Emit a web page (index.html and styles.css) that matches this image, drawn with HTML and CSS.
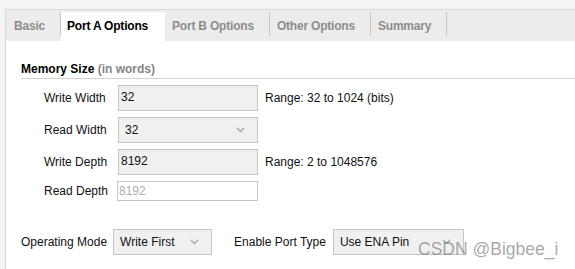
FILE: index.html
```html
<!DOCTYPE html>
<html lang="en">
<head>
  <meta charset="UTF-8" />
  <title>Block Memory Generator - Port A Options</title>
  <link rel="stylesheet" href="styles.css">
</head>
<body>
  <div class="dialog">
    <div class="tabs">
      <div class="tab">Basic</div>
      <div class="tab active">Port A Options</div>
      <div class="tab">Port B Options</div>
      <div class="tab">Other Options</div>
      <div class="tab">Summary</div>
    </div>

    <div class="panel">
      <div class="section-title">Memory Size <span class="hint">(in words)</span></div>

      <div class="fields">
        <label class="field-label">Write Width</label>
        <div class="input">32</div>
        <span class="range">Range: 32 to 1024 (bits)</span>

        <label class="field-label">Read Width</label>
        <div class="select">
          <span>32</span>
          <svg class="chevron" width="9" height="6" viewBox="0 0 9 6"><polyline points="1,1 4.5,4.5 8,1" fill="none" stroke="#a6a6a6" stroke-width="1.4"/></svg>
        </div>
        <span></span>

        <label class="field-label">Write Depth</label>
        <div class="input">8192</div>
        <span class="range">Range: 2 to 1048576</span>

        <label class="field-label">Read Depth</label>
        <div class="input disabled">8192</div>
        <span></span>
      </div>

      <div class="mode-row">
        <label class="mode-label">Operating Mode</label>
        <div class="select mode-select">
          <span>Write First</span>
          <svg class="chevron" width="9" height="6" viewBox="0 0 9 6"><polyline points="1,1 4.5,4.5 8,1" fill="none" stroke="#a6a6a6" stroke-width="1.4"/></svg>
        </div>
        <label class="mode-label port-type">Enable Port Type</label>
        <div class="select enable-select">
          <span>Use ENA Pin</span>
          <svg class="chevron" width="9" height="6" viewBox="0 0 9 6"><polyline points="1,1 4.5,4.5 8,1" fill="none" stroke="#a6a6a6" stroke-width="1.4"/></svg>
        </div>
      </div>
    </div>

    <div class="watermark">CSDN @Bigbee_i</div>
  </div>
</body>
</html>
```

FILE: styles.css
```css
:root {
  --outer: #f5f5f5;
  --line: #d9d9d9;
  --tabbar: #ececec;
  --tab-sep: #c4c4c4;
  --tab-text: #8c8c8c;
  --field-bg: #f0f0f0;
  --field-border: #c6c6c6;
  --text: #111;
}

body {
  margin: 0;
  padding: 0;
  background: var(--outer);
  font-family: 'Liberation Sans', Arial, sans-serif;
  font-size: 12px;
  color: var(--text);
  height: 269px;
  overflow: hidden;
}

.dialog {
  position: relative;
  margin: 9px 0 0 5px;
  border-top: 1px solid var(--line);
  border-left: 1px solid var(--line);
  background: #fff;
  height: 260px;
}

.tabs {
  display: flex;
  align-items: flex-start;
  height: 31px;
  padding-top: 2px;
  box-sizing: border-box;
  background: var(--tabbar);
}

.tab {
  height: 29px;
  line-height: 29px;
  padding: 0 16px 0 7px;
  font-weight: bold;
  letter-spacing: -0.2px;
  color: var(--tab-text);
  background: linear-gradient(var(--tab-sep), var(--tab-sep)) right top / 1px 24px no-repeat;
}

.tab:first-child {
  padding-left: 8px;
}

.tab.active {
  background: #fff;
  color: #000;
  padding: 0 17px 0 6px;
}

.panel {
  padding: 0 0 0 15px;
}

.section-title {
  margin-top: 20px;
  line-height: 16px;
  padding-bottom: 1px;
  border-bottom: 1px solid #d2d2d2;
  font-weight: bold;
  color: #000;
}

.hint {
  color: #858585;
}

.fields {
  display: grid;
  grid-template-columns: 74px 140px auto;
  row-gap: 6px;
  align-items: center;
  margin: 6px 0 0 23px;
}

.field-label {
  color: var(--text);
}

.input {
  height: 26px;
  box-sizing: border-box;
  border: 1px solid var(--field-border);
  background: var(--field-bg);
  padding: 0 2px;
  line-height: 22px;
}

.input.disabled {
  height: 20px;
  line-height: 18px;
  background: #fff;
  color: #adadad;
  margin-left: -1px;
  padding-left: 1px;
}

.range {
  margin-left: 7px;
}

.select {
  display: flex;
  align-items: center;
  justify-content: space-between;
  height: 26px;
  box-sizing: border-box;
  border: 1px solid var(--field-border);
  background: var(--field-bg);
  padding: 0 12px 0 6px;
}

.chevron {
  display: block;
}

.mode-row {
  display: flex;
  align-items: center;
  margin-top: 28px;
}

.mode-label {
  margin-right: 6px;
}

.port-type {
  margin-left: 22px;
  margin-right: 7px;
}

.mode-select {
  width: 99px;
}

.enable-select {
  width: 131px;
}

.watermark {
  position: absolute;
  left: 412px;
  top: 229px;
  font-size: 17.5px;
  color: rgba(110, 110, 110, 0.6);
  white-space: nowrap;
}
```
